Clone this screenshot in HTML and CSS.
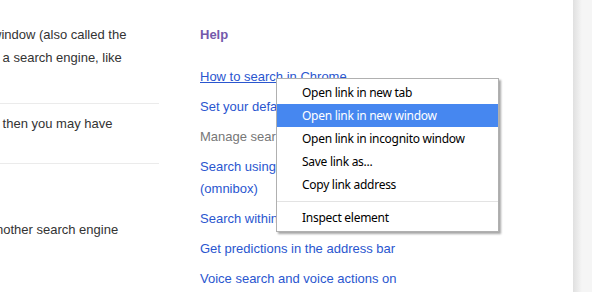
FILE: index.html
```html
<!DOCTYPE html>
<html lang="en">
<head>
    <meta charset="UTF-8">
    <title>Search in Chrome - Help</title>
    <link rel="stylesheet" href="styles.css">
</head>
<body>
    <div class="page">
        <div class="article">
            <p class="para first">window (also called the<br>&nbsp;a search engine, like</p>
            <div class="rule"></div>
            <p class="para second">&nbsp;then you may have</p>
            <div class="rule"></div>
            <p class="para third">nother search engine</p>
        </div>
        <div class="sidebar">
            <h3 class="side-title">Help</h3>
            <ul class="links">
                <li><a href="#" class="hover">How to search in Chrome</a></li>
                <li><a href="#">Set your default search engine</a></li>
                <li class="current">Manage search engines</li>
                <li><a href="#">Search using the address bar<br>(omnibox)</a></li>
                <li><a href="#">Search within a site</a></li>
                <li><a href="#">Get predictions in the address bar</a></li>
                <li><a href="#">Voice search and voice actions on</a></li>
            </ul>
        </div>
        <!-- контекстное меню поверх ссылок -->
        <div class="menu">
            <div class="item">Open link in new tab</div>
            <div class="item active">Open link in new window</div>
            <div class="item">Open link in incognito window</div>
            <div class="item">Save link as...</div>
            <div class="item">Copy link address</div>
            <div class="sep"></div>
            <div class="item">Inspect element</div>
        </div>
    </div>
    <div class="edge"></div>
</body>
</html>
```

FILE: styles.css
```css
body {
    margin: 0;
    display: flex;
    height: 292px;
    overflow: hidden;
    font-family: 'Liberation Sans', Arial, sans-serif;
    font-size: 13px;
    background-color: #ffffff;
}
.page {
    width: 573px;
    position: relative;
    display: flex;
    background-color: #ffffff;
}
.edge {
    flex: 1;
    background: linear-gradient(to right, #e0e0e0, #f5f5f5 9px);
}
.article {
    width: 160px;
    margin-left: -1px;
    padding-top: 23px;
    color: #333333;
    line-height: 23px;
}
.para {
    margin: 0;
    white-space: nowrap;
}
.first {
    margin-bottom: 34px;
    text-indent: -7px;
}
.second {
    margin-top: 8px;
    margin-bottom: 28px;
}
.third {
    margin-top: 54px;
    text-indent: -3px;
}
.rule {
    height: 1px;
    background-color: #ebebeb;
}
.sidebar {
    margin-left: 41px;
    padding-top: 24px;
    line-height: 22px;
}
.side-title {
    margin: 0;
    font-size: 13px;
    font-weight: bold;
    color: #7459ab;
}
.links {
    list-style: none;
    margin: 20px 0 0;
    padding: 0;
}
.links li {
    margin-bottom: 8px;
    white-space: nowrap;
}
.links a {
    color: #2a56cf;
    text-decoration: none;
}
.links a.hover {
    text-decoration: underline;
}
.links .current {
    color: #777777;
}
.menu {
    position: absolute;
    left: 276px;
    top: 78px;
    width: 221px;
    padding: 2px 0;
    background-color: #ffffff;
    border: 1px solid #b0b0b0;
    box-shadow: 2px 2px 2px rgba(0,0,0,0.35);
    font-family: 'Noto Sans', 'Open Sans', sans-serif;
    font-size: 12px;
    letter-spacing: -0.28px;
    color: #000000;
}
.item {
    height: 23px;
    line-height: 23px;
    padding-left: 25px;
    white-space: nowrap;
}
.item.active {
    background-color: #4687f0;
    color: #ffffff;
}
.sep {
    height: 1px;
    margin: 5px 0 4px;
    background-color: #e3e3e3;
}
```
